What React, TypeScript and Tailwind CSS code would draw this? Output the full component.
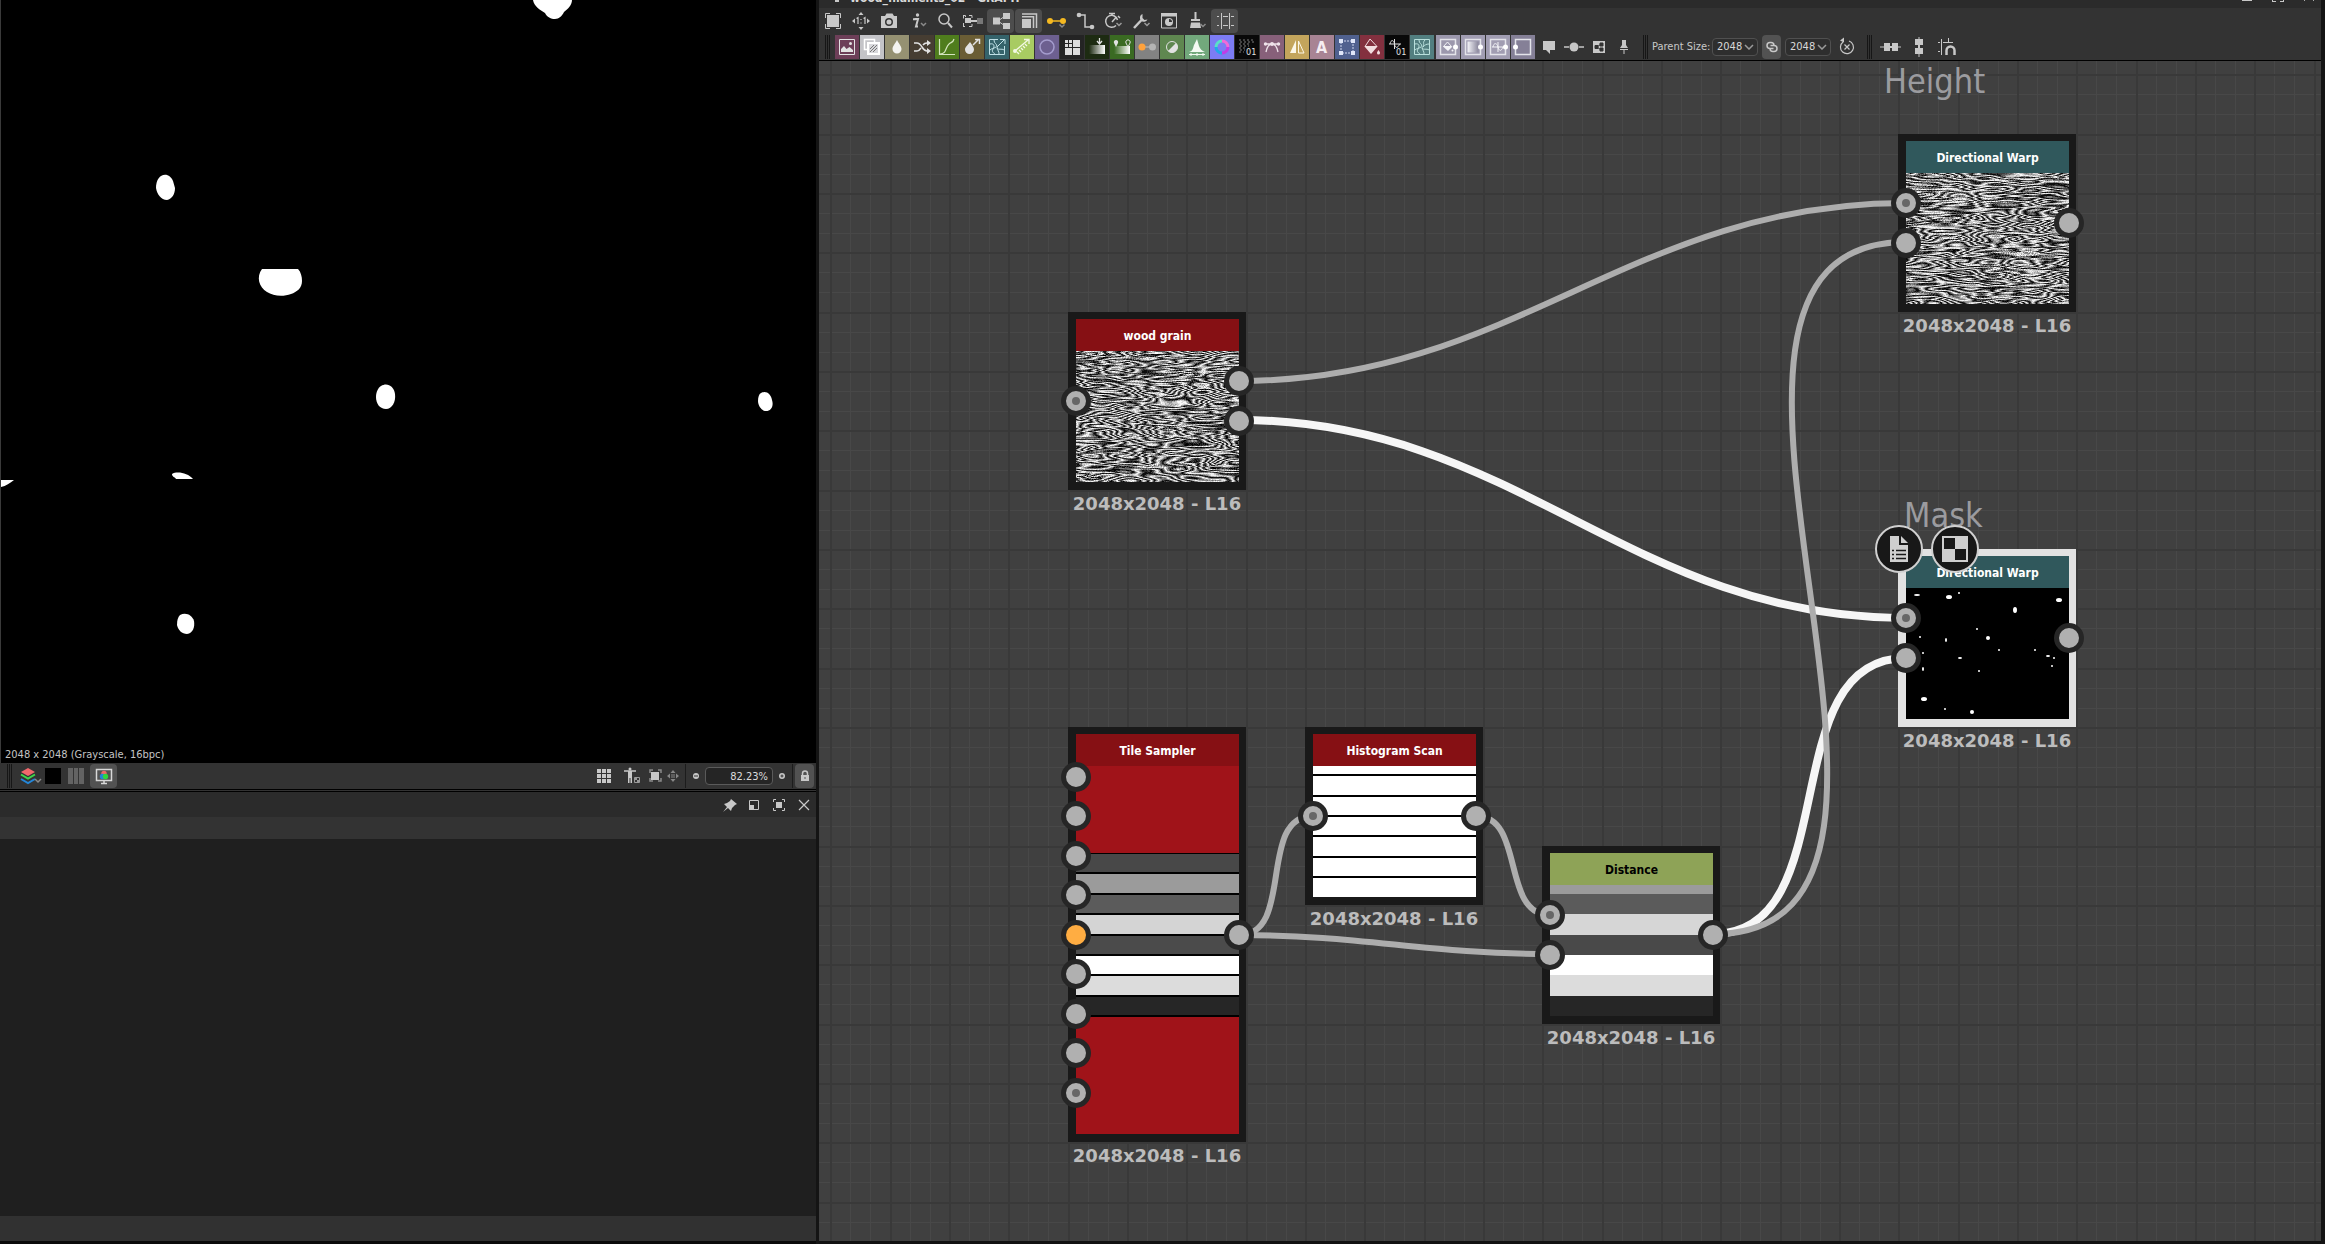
import { ReactNode } from "react";
import clsx from "clsx";

const ui = "font-['DejaVu_Sans_Condensed','Noto_Sans',sans-serif]";

type Tool = { label: string; icon: ReactNode; active?: boolean };
type Atomic = { label: string; bg: string; icon: ReactNode };
type Point = [number, number];
type PinData = { y: number; kind?: "primary" | "warn" };

const Svg = ({ children, w = 24, h = 24 }: { children: ReactNode; w?: number; h?: number }) => (
  <svg width={w} height={h} viewBox={`0 0 ${w} ${h}`} fill="none" stroke="none" className="block shrink-0" aria-hidden="true">
    {children}
  </svg>
);

const light = "#c8c8c8";

const mainTools: Tool[] = [
  {
    label: "Fit view",
    icon: (
      <>
        <path d="M6 6h12v12H6z" fill={light} />
        <path d="M4.500 9V4.500H9M15 4.500h4.500V9M19.500 15v4.500H15M9 19.500H4.500V15" stroke={light} />
      </>
    ),
  },
  {
    label: "Actual size",
    icon: (
      <>
        <path d="M12 3l2.500 3h-5zM12 21l2.500-3h-5zM3 12l3-2.500v5zM21 12l-3-2.500v5z" fill={light} />
        <path d="M7.500 9.500L9 8.500V15M14.500 9.500l1.500-1V15M12 10v1M12 13.500v1" stroke={light} strokeWidth="1.200" />
      </>
    ),
  },
  {
    label: "Screenshot",
    icon: (
      <path fillRule="evenodd" fill={light} d="M4 7h4l1.500-2.500h6L17 7h3v12H4zM12 9a4 4 0 100 8 4 4 0 000-8zm0 1.500a2.500 2.500 0 110 5 2.500 2.500 0 010-5z" />
    ),
  },
  {
    label: "Information",
    icon: (
      <>
        <path d="M9.500 10h3.500l-2 7.500h2M8 10.200h3" stroke={light} strokeWidth="2" />
        <circle cx="12.500" cy="6" r="1.700" fill={light} />
        <path d="M16 14l2.500 2.500L21 14" stroke="#8a8a8a" strokeWidth="1.500" />
      </>
    ),
  },
  {
    label: "Search",
    icon: (
      <>
        <circle cx="11" cy="10" r="5" stroke={light} strokeWidth="1.500" />
        <path d="M15 14l4 4.500" stroke={light} strokeWidth="2" />
      </>
    ),
  },
  {
    label: "Insert between",
    icon: (
      <>
        <path d="M4.500 8V6.500H2M2 17.500h2M2.500 9.500v-3M2.500 14v3.500M8 6.500h3V9M8 17.500h3V15" stroke={light} />
        <path d="M4 9h6v5H4zM10 11h6v2h-6z" fill={light} />
        <path d="M16 9h6v6h-6z" fill="#777" />
      </>
    ),
  },
  {
    label: "Show connections",
    active: true,
    icon: (
      <>
        <path d="M4 8.500h7v7H4zM14 4h7v6h-7zM14 14h7v6h-7z" fill={light} />
        <path d="M9 12l7-5M9 12l7 5" stroke={light} />
      </>
    ),
  },
  {
    label: "Show thumbnails",
    active: true,
    icon: (
      <>
        <path d="M5 10h9v9H5z" fill={light} />
        <path d="M5 7.800h11.500V19M5 5h14.500v14" stroke={light} strokeWidth="1.500" />
      </>
    ),
  },
  {
    label: "Link style",
    icon: (
      <>
        <path d="M5 12h14" stroke="#f5b921" strokeWidth="1.500" />
        <circle cx="5" cy="12" r="3" fill="#f5b921" />
        <circle cx="18" cy="12" r="3" fill="#f5b921" />
        <path d="M14.500 15.500L17 18l2.500-2.500" stroke="#8a8a8a" strokeWidth="1.500" />
      </>
    ),
  },
  {
    label: "Orthogonal links",
    icon: (
      <>
        <path d="M6 6h6v12h7" stroke={light} strokeWidth="1.500" />
        <circle cx="6" cy="6" r="2.300" fill={light} />
        <circle cx="19" cy="18" r="2.300" fill={light} />
      </>
    ),
  },
  {
    label: "Timing",
    icon: (
      <>
        <path d="M15 16.500A6 6 0 1116.500 11" stroke={light} strokeWidth="1.500" />
        <path d="M8 4.500h6M11 5v2M11 13l4-4.500M17 7l2 2" stroke={light} strokeWidth="1.500" />
        <path d="M15.500 14l2.500 2.500L20.500 14" stroke="#9a9a9a" strokeWidth="1.500" />
      </>
    ),
  },
  {
    label: "Tools",
    icon: (
      <>
        <path d="M5 19l8-8.500" stroke={light} strokeWidth="2.500" />
        <path d="M13.500 5a4 4 0 105 5.500l-3 .5-2-2z" fill={light} />
        <path d="M15.500 14l2.500 2.500L20.500 14" stroke="#9a9a9a" strokeWidth="1.500" />
      </>
    ),
  },
  {
    label: "Preview",
    icon: (
      <>
        <path d="M4.500 5h15v14h-15z" stroke={light} />
        <path d="M4 4h16v3.500H4z" fill={light} />
        <circle cx="12" cy="13" r="4" fill={light} />
        <path d="M12 13v-3a3 3 0 013 3z" fill="#333" />
      </>
    ),
  },
  {
    label: "Clean",
    icon: (
      <>
        <path d="M9.500 3h2v7h-2zM6 10h9v2H6zM6 13.500h9L16 19H5z" fill={light} />
        <path d="M15.500 15l2.500 2.500L20.500 15" stroke="#8a8a8a" strokeWidth="1.500" />
      </>
    ),
  },
  {
    label: "Snap to grid",
    active: true,
    icon: <path d="M8.500 4v16M16.500 4v16M4 7.500h2M10 7.500h5M18 7.500h3M4 16.500h2M10 16.500h5M18 16.500h3" stroke={light} />,
  },
];

const frame = <path d="M4.500 4.500h15v15h-15z" stroke="#e4e4ea" strokeWidth="1.500" />;
const pale = "#e2e2e2";

const atomics: Atomic[] = [
  {
    label: "Bitmap",
    bg: "bg-[#6d3f58]",
    icon: (
      <>
        <path d="M4.500 4.500h15v15h-15z" stroke={pale} />
        <path d="M6 17v-3l3-3 2.500 3 3-2 3.500 3v2z" fill={pale} />
        <circle cx="15.500" cy="8.500" r="1.500" fill={pale} />
      </>
    ),
  },
  {
    label: "Blend",
    bg: "bg-[#c4c4c8]",
    icon: (
      <>
        <path d="M4.500 4.500h10v10h-10z" stroke="#fff" strokeWidth="1.500" />
        <path d="M8 8h11v11H8z" stroke="#fff" strokeWidth="2" fill="#d8d8dc" />
        <path d="M10 14l4-4M10 17l7-7M13 17l4-4" stroke="#777" />
      </>
    ),
  },
  { label: "Blur", bg: "bg-[#959172]", icon: <path d="M12 5c2 4 4.500 6 4.500 9a4.500 4.500 0 01-9 0c0-3 2.500-5 4.500-9z" fill="#f4f4f0" /> },
  {
    label: "Channel shuffle",
    bg: "bg-[#463d32]",
    icon: (
      <>
        <path d="M4 8h3c5 0 5 8 10 8h1M4 16h3c2 0 3-1.500 4-3M13 10c1-1.500 2-2 4-2h1" stroke={pale} strokeWidth="1.500" />
        <path d="M17 5l4 3-4 3zM17 13l4 3-4 3z" fill={pale} />
      </>
    ),
  },
  { label: "Curve", bg: "bg-[#4f7d1d]", icon: <path d="M4.500 4v16M4 19.500h16M5 19c7 0 5-7 9-10 2-2 4-1 5-5" stroke="#d5e6c0" strokeWidth="1.200" /> },
  {
    label: "Directional blur",
    bg: "bg-[#6a5d35]",
    icon: (
      <>
        <path d="M10 7c2 3 4 5 4 7.500a4.500 4.500 0 01-9 0C5 12 8 10 10 7z" fill={pale} />
        <path d="M13 10l5-5M15 4.500h4.500V9" stroke={pale} strokeWidth="1.500" />
      </>
    ),
  },
  {
    label: "Directional warp",
    bg: "bg-[#35636b]",
    icon: <path d="M13 4.500H4.500v15h15V11M15 4.500h5V9M19 5l-7 7M5 9c4-1 5 2 3 5s1 4 2 5M9 5c0 4 3 3 3 7s5 1 7 3M5 15c2-2 3-1 6-3M14 19c0-3-1-3-2-6" stroke="#bfe0e6" />,
  },
  {
    label: "Distance",
    bg: "bg-[#a8cb62]",
    icon: (
      <>
        <path d="M5 16L18 5M14 4.500h5V9M9 15l2 2M11 13l2 2M13 11l2 2M15 9l2 2M7 17l2 2" stroke="#f2f8e4" strokeWidth="1.300" />
        <circle cx="5" cy="16" r="2" fill="#f2f8e4" />
      </>
    ),
  },
  { label: "Emboss", bg: "bg-[#6d6090]", icon: <circle cx="12" cy="12" r="7" stroke="#a49ccd" strokeWidth="1.500" /> },
  {
    label: "FX map",
    bg: "bg-[#242424]",
    icon: <path d="M5 5h3v3H5zM9 5h3v3H9zM5 9h3v3H5zM9 9h3v3H9zM13 5h7v7h-7zM5 13h7v7H5zM13 13h7v7h-7z" fill="#dcdcdc" />,
  },
  {
    label: "Gradient dynamic",
    bg: "bg-[#1d2b12]",
    icon: (
      <>
        <path d="M4 10h16v9H4z" fill="url(#fade)" />
        <path d="M14.500 3v5M12 6l2.500 3L17 6" stroke={pale} strokeWidth="1.300" />
      </>
    ),
  },
  {
    label: "Gradient map",
    bg: "bg-[#3a6a22]",
    icon: (
      <>
        <path d="M4 11h16v8H4z" fill="url(#fade)" />
        <path d="M6 12L4 8a2.200 2.200 0 114 0z" fill={pale} />
        <path d="M18 12l-2-4a2.200 2.200 0 114 0z" stroke={pale} />
      </>
    ),
  },
  {
    label: "Grayscale conversion",
    bg: "bg-[#828282]",
    icon: (
      <>
        <path d="M7 12h10" stroke="#c0c0c0" />
        <circle cx="7" cy="12" r="3.500" fill="#ffa23c" />
        <circle cx="17.500" cy="12" r="3.500" fill="#b4b4b4" />
      </>
    ),
  },
  {
    label: "HSL",
    bg: "bg-[#5f8750]",
    icon: (
      <>
        <circle cx="12" cy="12" r="5.500" stroke={pale} />
        <path d="M16 8A5.500 5.500 0 018 16z" fill={pale} />
      </>
    ),
  },
  {
    label: "Levels",
    bg: "bg-[#72a87c]",
    icon: (
      <>
        <path d="M4 17c4-1 4-4 5-7l3-6 2 7c1 3 3 5 6 6z" fill="#f3faf3" />
        <path d="M4 19.500h16M6 18v3M12 18v3M18 18v3" stroke="#f3faf3" />
      </>
    ),
  },
  {
    label: "Normal",
    bg: "bg-[#7c7cf4]",
    icon: (
      <>
        <path d="M12 6a6 6 0 016 6" stroke="#f06ad8" strokeWidth="3" />
        <path d="M18 12a6 6 0 01-6 6" stroke="#c03ce8" strokeWidth="3" />
        <path d="M12 18a6 6 0 01-6-6" stroke="#20a8e8" strokeWidth="3" />
        <path d="M6 12a6 6 0 016-6" stroke="#58e0c8" strokeWidth="3" />
      </>
    ),
  },
  {
    label: "Pixel processor",
    bg: "bg-[#090909]",
    icon: (
      <>
        <path d="M4 5h14M5 7h14M4 9h12M5 11h9M4 13h7M5 15h5M4 17h5" stroke="#555" strokeWidth="1.500" strokeDasharray="2 2" />
        <text x="11" y="20" fontSize="9" fill={pale}>01</text>
      </>
    ),
  },
  {
    label: "SVG",
    bg: "bg-[#87607a]",
    icon: (
      <>
        <path d="M4 9h16M6 17c1-5 3-8 6-8s5 3 6 8" stroke="#efe2ea" strokeWidth="1.300" />
        <circle cx="5.500" cy="9" r="1.700" fill="#efe2ea" />
        <circle cx="12" cy="9" r="2" fill="#efe2ea" />
        <circle cx="18.500" cy="9" r="1.700" fill="#efe2ea" />
      </>
    ),
  },
  {
    label: "Mirror",
    bg: "bg-[#c3a55c]",
    icon: (
      <>
        <path d="M11 5v13H5z" fill="#fbf6e6" />
        <path d="M13.500 6v12H19z" stroke="#fbf6e6" />
      </>
    ),
  },
  {
    label: "Text",
    bg: "bg-[#a88494]",
    icon: <text x="6" y="18" fontSize="16" fontWeight="700" fill="#f6eef2">A</text>,
  },
  {
    label: "Transformation",
    bg: "bg-[#50618f]",
    icon: (
      <>
        <path d="M6 6h12v12H6z" stroke="#cfd8f0" strokeDasharray="2 1" />
        <path d="M4 4h4v4H4zM16 4h4v4h-4zM4 16h4v4H4zM16 16h4v4h-4z" fill="#dfe6f8" />
      </>
    ),
  },
  {
    label: "Uniform color",
    bg: "bg-[#83303f]",
    icon: (
      <>
        <path d="M10 4l7 7.500H5z" stroke="#f2dde0" />
        <path d="M4.500 11.500h13L11 19z" fill="#f2dde0" />
        <path d="M18.500 15c1 1.500 1.500 2 1.500 3a1.500 1.500 0 01-3 0c0-1 .5-1.500 1.500-3z" fill="#f2dde0" />
      </>
    ),
  },
  {
    label: "Value processor",
    bg: "bg-[#090909]",
    icon: (
      <>
        <path d="M4 9h12M9.500 4v10M5 9c1-5 4-4 4.500 0s3 5 5 0" stroke={pale} />
        <text x="11" y="20" fontSize="9" fill={pale}>01</text>
      </>
    ),
  },
  {
    label: "Warp",
    bg: "bg-[#527f80]",
    icon: <path d="M4.500 4.500h15v15h-15zM5 9c4-1 5 2 3 5s1 4 2 5M9 5c0 4 3 3 3 7s5 1 7 3M5 15c2-2 3-1 6-3M14 19c0-3-1-3-2-6M15 5c-3 3 0 4-2 7M19 9c-3 0-4 1-6 3" stroke="#b9e0dc" />,
  },
];

const inputs: Atomic[] = [
  {
    label: "Input color",
    bg: "bg-[#9c98ad]",
    icon: (
      <>
        {frame}
        <path d="M11.500 7l4 4.500h-8z" stroke="#f4f4f8" />
        <path d="M7 11.500h9.500L12 16z" fill="#f4f4f8" />
        <circle cx="16.500" cy="15.500" r="1" fill="#f4f4f8" />
        <circle cx="19.500" cy="12" r="2.500" fill="#fff" />
      </>
    ),
  },
  {
    label: "Input grayscale",
    bg: "bg-[#a19db2]",
    icon: (
      <>
        {frame}
        <path d="M6.500 6.500h11v11h-11z" fill="url(#fade-dark)" />
        <circle cx="19.500" cy="12" r="2.500" fill="#fff" />
      </>
    ),
  },
  {
    label: "Input value",
    bg: "bg-[#a19db2]",
    icon: (
      <>
        {frame}
        <path d="M6 12h12M12 7v10M7 12c1-5 4-4 5 0s3 5 5 0" stroke="#f4f4f8" />
        <circle cx="19.500" cy="12" r="2.500" fill="#fff" />
      </>
    ),
  },
  {
    label: "Output",
    bg: "bg-[#858097]",
    icon: (
      <>
        {frame}
        <circle cx="4.500" cy="12" r="2.500" fill="#fff" />
      </>
    ),
  },
];

const extras: Tool[] = [
  { label: "Comment", icon: <path d="M6 6h12v9h-5v4l-4-4H6z" fill={light} /> },
  {
    label: "Dot",
    icon: (
      <>
        <path d="M2 12h5M17 12h5" stroke={light} strokeWidth="1.500" />
        <circle cx="12" cy="12" r="4.500" fill={light} />
      </>
    ),
  },
  {
    label: "Frame",
    icon: (
      <>
        <path d="M6 6h12v12H6z" fill={light} />
        <path d="M8 10.500h3v3H8zM13 8h3v3h-3zM13 13h3v3h-3zM10 12l4-3M10 12l4 3" fill="#333" stroke="#333" />
      </>
    ),
  },
  {
    label: "Navigation pin",
    icon: (
      <>
        <path d="M12 14v5M8 14.500h8" stroke={light} />
        <path d="M10 5h4v5l2 3H8l2-3z" fill={light} />
      </>
    ),
  },
];

const aligners: Tool[] = [
  { label: "Align horizontally", icon: <path d="M1 11.500h4V8h6v3h2V8h6v3.500h3v1h-3V16h-6v-3h-2v3H5v-3.500H1z" fill={light} /> },
  { label: "Align vertically", icon: <path d="M11.500 2h1v2H16v6h-3v3h3v6h-3.500v3h-1v-3H8v-6h3v-3H8V4h3.500z" fill={light} /> },
  {
    label: "Snap",
    icon: (
      <>
        <path d="M6.500 4v16M13.500 3v4M3 7.500h2M8 7.500h10M3 16.500h2" stroke={light} />
        <path d="M11.500 20v-4.500a4 4 0 018 0V20" stroke={light} strokeWidth="2.500" />
      </>
    ),
  },
];

const Grip = () => (
  <div className="flex h-6 gap-px">
    <i className="w-px bg-[#161616]" />
    <i className="w-px bg-[#161616]" />
    <i className="w-px bg-[#161616]" />
  </div>
);

const ToolButton = ({ label, icon, active }: Tool) => (
  <button
    aria-label={label}
    className={clsx("flex h-6 w-[27px] items-center justify-center rounded-sm", active && "bg-[#4d4d4d]")}
  >
    <Svg>{icon}</Svg>
  </button>
);

const AtomicButton = ({ label, bg, icon }: Atomic) => (
  <button aria-label={label} className={clsx("h-6 w-6", bg)}>
    <Svg>{icon}</Svg>
  </button>
);

const SizeSelect = ({ label, id }: { label: string; id: string }) => (
  <div className="relative">
    <select
      id={id}
      aria-label={label}
      defaultValue="2048"
      className="block h-[18px] w-[46px] appearance-none rounded-sm border border-[#505050] bg-[#2e2e2e] pl-1 text-[11px] leading-4 text-[#d8d8d8]"
    >
      <option>1024</option>
      <option>2048</option>
      <option>4096</option>
    </select>
    <svg width="10" height="6" viewBox="0 0 10 6" className="pointer-events-none absolute top-[6px] right-1">
      <path d="M1 1l4 4 4-4" fill="none" stroke="#9a9a9a" strokeWidth="1.500" />
    </svg>
  </div>
);

// ---------- 2D view ----------

const Viewer = () => (
  <div className="relative min-h-0 flex-1 overflow-hidden border-l border-[#3a3a3a] bg-black">
    <svg width="815" height="763" className="block" fill="#fff">
      <path d="M532 0h39c0 5-4 9-8 12-2 4-5 7-9 7s-8-2-10-6c-5-3-11-7-12-13z" />
      <path d="M160 176c5-3 10 0 12 5l2 7c0 6-3 11-8 12-6 0-10-6-11-12 0-6 2-10 5-12z" />
      <path d="M261 269h36c3 3 4 8 4 12 0 7-5 11-11 13-8 3-18 2-24-2-8-5-11-15-5-23z" />
      <path d="M380 386c6-4 13 0 14 8 1 8-3 15-9 15s-10-5-10-12c0-5 2-9 5-11z" />
      <path d="M760 393c5-3 10 1 11 7 2 6-1 11-6 11-4 0-8-5-8-10 0-4 1-7 3-8z" />
      <path d="M171 474c5-3 16-1 21 5h-17c-1-2-4-2-4-5z" />
      <path d="M0 480h13c-4 3-8 6-13 7z" />
      <path d="M179 615c6-3 12 0 14 6 1 6-1 12-7 13-5 0-9-4-10-9 0-5 1-8 3-10z" />
    </svg>
    <p className="absolute bottom-0 left-1 text-[11px] leading-4 text-[#c4c4c4]">2048 x 2048 (Grayscale, 16bpc)</p>
  </div>
);

const ViewerBar = () => (
  <div className="flex h-[26px] shrink-0 items-center bg-[#333] pr-px pl-[7px]">
    <Grip />
    <button aria-label="Channels" className="ml-2">
      <Svg w={25}>
        <path d="M8 4l7 4-7 4-7-4z" fill="#f2686c" />
        <path d="M1 10.500l7 4 7-4" stroke="#3fd64c" strokeWidth="2" />
        <path d="M1 15l7 4 7-4" stroke="#2486d8" strokeWidth="2" />
        <path d="M15 15l3 3 3-3" stroke="#8a8a8a" strokeWidth="1.500" />
      </Svg>
    </button>
    <button aria-label="Background colour" className="h-4 w-4 bg-black" />
    <button aria-label="Tiling" className="ml-[7px] flex h-4 w-4 gap-px">
      <i className="flex-1 bg-[#636363]" />
      <i className="flex-1 bg-[#636363]" />
      <i className="flex-1 bg-[#636363]" />
    </button>
    <button aria-label="Colour management" className="ml-[6px] flex h-6 w-[27px] items-center justify-center rounded-sm bg-[#525252]">
      <Svg>
        <path d="M4.500 5.500h15v11h-15zM9 19.500h6M12 17v2" stroke="#d8d8d8" strokeWidth="1.500" />
        <circle cx="12" cy="9.500" r="2.700" fill="#f0666a" />
        <circle cx="10.500" cy="12.500" r="2.700" fill="#2486d8" />
        <circle cx="13.500" cy="12.500" r="2.700" fill="#2fd63f" />
      </Svg>
    </button>
    <div className="ml-auto flex items-center">
      <button aria-label="Grid">
        <Svg w={20}>
          <path d="M3 5h4v4H3zM8 5h4v4H8zM13 5h4v4h-4zM3 10h4v4H3zM8 10h4v4H8zM13 10h4v4h-4zM3 15h4v4H3zM8 15h4v4H8zM13 15h4v4h-4z" fill={light} />
        </Svg>
      </button>
      <button aria-label="Physical size" className="ml-2">
        <Svg>
          <path d="M2 7h12M8 8v4" stroke={light} strokeWidth="1.500" />
          <path d="M6 7h4v12H8.500v-5h-1v5H6z" fill={light} />
          <circle cx="8" cy="5" r="1.500" fill={light} />
          <path d="M12.500 13.500h5v5h-5z" stroke="#9a9a9a" />
          <path d="M13 14h2v2h2v2h-2v-2h-2z" fill="#9a9a9a" />
        </Svg>
      </button>
      <button aria-label="Fit">
        <Svg w={18}>
          <path d="M5 8h8v8H5z" fill={light} />
          <path d="M4 9V6h3M12 6h3v3M15 14v3h-3M7 17H4v-3" stroke="#8a8a8a" strokeWidth="1.500" />
        </Svg>
      </button>
      <button aria-label="Actual size">
        <Svg w={18}>
          <path d="M9 6l2.500 3h-5zM9 18l2.500-3h-5zM3 12l3-2.500v5zM15 12l-3-2.500v5z" fill="#888" />
          <path d="M8 10v4M10 10v4" stroke="#888" />
        </Svg>
      </button>
      <i className="mx-[3px] h-6 w-px bg-[#1c1c1c]" />
      <button aria-label="Zoom out">
        <Svg w={16}>
          <circle cx="7" cy="12" r="3" fill={light} />
          <path d="M5 12h4" stroke="#333" />
        </Svg>
      </button>
      <input
        aria-label="Zoom"
        defaultValue="82.23%"
        className="h-[18px] w-[68px] rounded-sm border border-[#5a5a5a] bg-[#252525] px-1 text-right text-[11px] leading-4 text-[#dcdcdc]"
      />
      <button aria-label="Zoom in" className="ml-px">
        <Svg w={16}>
          <circle cx="8" cy="12" r="3" fill={light} />
          <path d="M6.500 12h3M8 10.500v3" stroke="#333" />
        </Svg>
      </button>
      <i className="mx-[2px] h-6 w-px bg-[#1c1c1c]" />
      <button aria-label="Lock" className="mr-px flex h-6 w-[19px] justify-center rounded-sm bg-[#525252]">
        <Svg w={18}>
          <path d="M6.500 11V9.500a2.500 2.500 0 015 0V11" stroke={light} strokeWidth="1.500" />
          <path d="M5 11h8v6H5z" fill={light} />
          <path d="M9 13v2" stroke="#525252" />
        </Svg>
      </button>
    </div>
  </div>
);

const DockPanel = () => (
  <section className="flex h-[452px] shrink-0 flex-col border-b-[3px] border-[#0a0a0a] bg-[#1f1f1f]">
    <header className="flex h-[25px] shrink-0 items-center justify-end bg-[#2b2b2b]">
      <button aria-label="Pin" className="mr-px">
        <Svg>
          <path d="M14 6l6 5-2 1-3 3-1 3-3-3-5 4 4-5-3-3 3-1 3-2z" fill={light} />
        </Svg>
      </button>
      <button aria-label="Detach" className="mr-px">
        <Svg>
          <path d="M7.500 7.500h9v9h-9z" stroke={light} />
          <path d="M7 12h5v5H7z" fill={light} />
        </Svg>
      </button>
      <button aria-label="Maximize" className="mr-px">
        <Svg>
          <path d="M9 9h6v6H9z" fill={light} />
          <path d="M6.500 9V6.500H9M15 6.500h2.500V9M17.500 15v2.500H15M9 17.500H6.500V15" stroke={light} />
        </Svg>
      </button>
      <button aria-label="Close">
        <Svg>
          <path d="M7 7l10 10M17 7L7 17" stroke={light} strokeWidth="1.200" />
        </Svg>
      </button>
    </header>
    <div className="h-[22px] shrink-0 bg-[#333]" />
    <div className="flex-1" />
    <footer className="h-[25px] shrink-0 bg-[#313131]" />
  </section>
);

// ---------- graph ----------

const Pin = ({ kind }: { kind?: PinData["kind"] }) => (
  <span
    className={clsx(
      "flex h-[30px] w-[30px] items-center justify-center rounded-full border-[5px] border-[#262626]",
      kind === "warn" ? "bg-[#ffad42]" : "bg-[#b0b0b0]",
    )}
  >
    {kind === "primary" && <i className="h-2 w-2 rounded-full bg-[#666]" />}
  </span>
);

type NodeProps = {
  title: string;
  at: Point;
  header: string;
  tall?: boolean;
  selected?: boolean;
  ins: PinData[];
  outs: number[];
  children: ReactNode;
};

// positions are measured from the top left corner of the graph canvas
const GraphNode = ({ title, at, header, tall, selected, ins, outs, children }: NodeProps) => (
  <article className="absolute w-[178px]" style={{ left: at[0], top: at[1] }}>
    <div
      className={clsx(
        "flex flex-col pt-[7px] pr-[7px] pb-2 pl-2",
        tall ? "h-[415px]" : "h-[178px]",
        selected ? "bg-[#e2e2e2]" : "bg-[#191919]",
      )}
    >
      <h3
        className={clsx(
          "flex h-8 shrink-0 items-center justify-center pt-[2px] text-[12px] leading-4 font-bold",
          header,
        )}
      >
        {title}
      </h3>
      <div className="min-h-0 flex-1 overflow-hidden">{children}</div>
    </div>
    <p className="mt-[2px] text-center font-['DejaVu_Sans',sans-serif] text-[18px] leading-6 font-bold whitespace-nowrap text-[#bcbcbc]">
      2048x2048 - L16
    </p>
    {ins.map((pin) => (
      <span key={pin.y} className="absolute -left-[7px]" style={{ top: pin.y - 15 }}>
        <Pin kind={pin.kind} />
      </span>
    ))}
    {outs.map((y) => (
      <span key={y} className="absolute -right-2" style={{ top: y - 15 }}>
        <Pin />
      </span>
    ))}
  </article>
);

// repeated black and white steps turn the noise into contour lines
const rings = "0 1 0 1 0 1 0 1 0 1 0 1 0 1 0 1 0 1 0 1 0 1 0 1 0 1 0 1 0";

const Grain = ({ seed }: { seed: number }) => (
  <svg width="163" height="131" className="block">
    <filter id={`grain-${seed}`} x="0" y="0" width="100%" height="100%" colorInterpolationFilters="sRGB">
      <feTurbulence type="fractalNoise" baseFrequency="0.014 0.09" numOctaves="2" seed={seed} />
      <feColorMatrix values="1 0 0 0 0  1 0 0 0 0  1 0 0 0 0  0 0 0 0 1" />
      <feComponentTransfer>
        <feFuncR type="table" tableValues={rings} />
        <feFuncG type="table" tableValues={rings} />
        <feFuncB type="table" tableValues={rings} />
      </feComponentTransfer>
    </filter>
    <rect width="163" height="131" filter={`url(#grain-${seed})`} />
  </svg>
);

const specks = [
  [11, 7, 3, 1], [43, 9, 3, 2], [53, 5, 1, 1], [153, 12, 3, 2], [109, 22, 2, 3], [71, 41, 1, 1], [14, 49, 1, 1],
  [40, 52, 1, 2], [82, 50, 2, 2], [93, 62, 1, 1], [129, 62, 1, 1], [17, 65, 1, 1], [54, 70, 2, 1], [142, 68, 2, 1],
  [148, 70, 1, 1], [146, 78, 1, 1], [17, 81, 1, 2], [73, 83, 1, 1], [18, 111, 3, 2], [39, 121, 1, 1], [66, 124, 2, 2],
];

const Band = ({ color, h, line }: { color: string; h: string; line?: boolean }) => (
  <div className={clsx("w-full", color, h, line && "border-b-2 border-black")} />
);

const wires: { from: Point; to: Point; hot?: boolean }[] = [
  { from: [420, 359], to: [1087, 557], hot: true },
  { from: [894, 873], to: [1087, 597], hot: true },
  { from: [420, 320], to: [1087, 142] },
  { from: [894, 873], to: [1087, 181] },
  { from: [420, 874], to: [494, 755] },
  { from: [420, 874], to: [731, 893] },
  { from: [657, 755], to: [731, 854] },
];

const wirePath = ([x1, y1]: Point, [x2, y2]: Point) => {
  const pull = Math.hypot(x2 - x1, y2 - y1) * 0.4;
  return `M${x1} ${y1}C${x1 + pull} ${y1} ${x2 - pull} ${y2} ${x2} ${y2}`;
};

const Canvas = () => (
  <main className="relative min-h-0 flex-1 overflow-hidden bg-[#404040]">
    <svg className="absolute inset-0 h-full w-full" aria-hidden="true">
      <defs>
        <linearGradient id="fade">
          <stop offset="0" stopColor="#fff" stopOpacity="0" />
          <stop offset="1" stopColor="#fff" />
        </linearGradient>
        <linearGradient id="fade-dark">
          <stop offset="0" stopColor="#f4f4f8" />
          <stop offset="1" stopColor="#8a879c" />
        </linearGradient>
        <pattern id="grid" x="249" y="251" width="178" height="178" patternUnits="userSpaceOnUse">
          <path d="M20.500 0v178M40.500 0v178M79.500 0v178M99.500 0v178M138.500 0v178M158.500 0v178M0 20.500h178M0 40.500h178M0 79.500h178M0 99.500h178M0 138.500h178M0 158.500h178" stroke="#484848" />
          <path d="M1 0v178M60 0v178M119 0v178M0 1h178M0 60h178M0 119h178" stroke="#393939" strokeWidth="2" />
        </pattern>
      </defs>
      <rect width="100%" height="100%" fill="url(#grid)" />
      {wires.map(({ from, to, hot }) => (
        <path
          key={`${from}-${to}`}
          d={wirePath(from, to)}
          fill="none"
          stroke={hot ? "#f6f6f6" : "#adadad"}
          strokeWidth={hot ? 8 : 6}
        />
      ))}
    </svg>

    <h2 className="absolute top-0 left-[1065px] text-[34px] leading-10 text-[#9b9b9f]">Height</h2>
    <h2 className="absolute top-[434px] left-[1085px] text-[34px] leading-10 text-[#9b9b9f]">Mask</h2>

    <GraphNode title="wood grain" at={[249, 251]} header="bg-[#861014] text-white" ins={[{ y: 89, kind: "primary" }]} outs={[69, 109]}>
      <Grain seed={4} />
    </GraphNode>

    <GraphNode title="Directional Warp" at={[1079, 73]} header="bg-[#30585c] text-white" ins={[{ y: 69, kind: "primary" }, { y: 109 }]} outs={[89]}>
      <Grain seed={9} />
    </GraphNode>

    <GraphNode title="Directional Warp" at={[1079, 488]} header="bg-[#30585c] text-white" selected ins={[{ y: 69, kind: "primary" }, { y: 109 }]} outs={[89]}>
      <svg width="163" height="131" className="block bg-black" fill="#fff">
        {specks.map(([x, y, rx, ry]) => (
          <ellipse key={`${x}-${y}`} cx={x} cy={y} rx={rx} ry={ry} />
        ))}
      </svg>
    </GraphNode>

    <GraphNode
      title="Tile Sampler"
      at={[249, 666]}
      header="bg-[#861014] text-white"
      tall
      ins={[
        { y: 50 }, { y: 89 }, { y: 129 }, { y: 168 }, { y: 208, kind: "warn" }, { y: 247 }, { y: 287 }, { y: 326 },
        { y: 366, kind: "primary" },
      ]}
      outs={[208]}
    >
      <Band color="bg-[#a01319]" h="h-[87px]" />
      <Band color="bg-[#484848] border-t" h="h-[21px]" line />
      <Band color="bg-[#9b9b9b]" h="h-[21px]" line />
      <Band color="bg-[#5b5b5b]" h="h-5" line />
      <Band color="bg-[#d4d4d4]" h="h-[21px]" line />
      <Band color="bg-[#4b4b4b]" h="h-5" line />
      <Band color="bg-white" h="h-5" line />
      <Band color="bg-[#dcdcdc]" h="h-[21px]" line />
      <Band color="bg-[#262626]" h="h-5" line />
      <Band color="bg-[#a01319]" h="h-full" />
    </GraphNode>

    <GraphNode title="Histogram Scan" at={[486, 666]} header="bg-[#861014] text-white" ins={[{ y: 89, kind: "primary" }]} outs={[89]}>
      <Band color="bg-white" h="h-[10px]" line />
      <Band color="bg-white" h="h-[21px]" line />
      <Band color="bg-white" h="h-5" line />
      <Band color="bg-white" h="h-5" line />
      <Band color="bg-white" h="h-[21px]" line />
      <Band color="bg-white" h="h-5" line />
      <Band color="bg-white" h="h-full" />
    </GraphNode>

    <GraphNode title="Distance" at={[723, 785]} header="bg-[#8ea357] text-black" ins={[{ y: 69, kind: "primary" }, { y: 109 }]} outs={[89]}>
      <Band color="bg-[#9b9b9b]" h="h-[9px]" />
      <Band color="bg-[#5b5b5b]" h="h-5" />
      <Band color="bg-[#d6d6d6]" h="h-[21px]" />
      <Band color="bg-[#494949]" h="h-5" />
      <Band color="bg-white" h="h-5" />
      <Band color="bg-[#dcdcdc]" h="h-[21px]" />
      <Band color="bg-[#262626]" h="h-full" />
    </GraphNode>

    <div className="absolute top-[464px] left-[1056px] flex gap-2">
      <span className="flex h-12 w-12 items-center justify-center rounded-full border-2 border-[#d0d0d0] bg-[#181818]">
        <Svg w={20} h={26}>
          <path d="M1 0h9v9h9v17H1z" fill="#cfcfcf" />
          <path d="M12 0l7 7h-7z" fill="#cfcfcf" />
          <path d="M3 14.500h2M7 14.500h10M3 18.500h2M7 18.500h10M3 22.500h2M7 22.500h10" stroke="#181818" strokeWidth="1.500" />
        </Svg>
      </span>
      <span className="flex h-12 w-12 items-center justify-center rounded-full border-2 border-[#d0d0d0] bg-[#181818]">
        <Svg w={26} h={26}>
          <path d="M0 0h26v26H0z" fill="#cfcfcf" />
          <path d="M2 2h11v11H2zM13 13h11v11H13z" fill="#181818" />
        </Svg>
      </span>
    </div>
  </main>
);

const GraphPanel = () => (
  <section className="mr-1 ml-[3px] flex min-w-0 flex-1 flex-col border-b-[3px] border-[#111]">
    <header className="flex h-2 shrink-0 items-end overflow-hidden bg-[#2b2b2b]">
      <span className="ml-4 h-[2px] w-1 self-start bg-[#c8c8c8]" />
      <h1 className="ml-[11px] self-start">
        <span className="-mt-2 block text-[12px] leading-3 font-bold text-[#d8d8d8]">wood_filaments_02 - GRAPH</span>
      </h1>
      <div className="mr-[7px] ml-auto flex gap-5 self-start">
        <button aria-label="Minimize" className="h-px w-[10px] bg-[#c8c8c8]" />
        <button aria-label="Maximize" className="flex h-[2px] w-3 justify-between">
          <i className="h-[2px] w-1 border-b border-l border-[#c8c8c8]" />
          <i className="h-[2px] w-1 border-r border-b border-[#c8c8c8]" />
        </button>
        <button aria-label="Close" className="flex h-px w-[10px] justify-between">
          <i className="h-px w-px bg-[#aaa]" />
          <i className="h-px w-px bg-[#aaa]" />
        </button>
      </div>
    </header>
    <nav className="flex h-[27px] shrink-0 items-start gap-px bg-[#333] pt-px">
      {mainTools.map((tool) => (
        <ToolButton key={tool.label} {...tool} />
      ))}
    </nav>
    <nav className="flex h-[26px] shrink-0 items-start border-b border-black bg-[#333] pl-[6px]">
      <Grip />
      <div className="ml-[5px] flex gap-px">
        {atomics.map((item) => (
          <AtomicButton key={item.label} {...item} />
        ))}
      </div>
      <div className="ml-[2px] flex gap-px">
        {inputs.map((item) => (
          <AtomicButton key={item.label} {...item} />
        ))}
      </div>
      <div className="ml-[2px] flex">
        {extras.map(({ label, icon }) => (
          <button key={label} aria-label={label} className="w-[25px]">
            <Svg>{icon}</Svg>
          </button>
        ))}
      </div>
      <div className="ml-[6px] flex">
        <Grip />
      </div>
      <div className="flex h-6 items-center">
        <label htmlFor="parent-width" className="ml-1 w-[60px] text-[11px] leading-4 whitespace-nowrap text-[#c8c8c8]">
          Parent Size:
        </label>
        <SizeSelect id="parent-width" label="Parent width" />
        <button aria-label="Link sizes" className="mx-1 flex h-6 w-[19px] items-center justify-center rounded-sm bg-[#525252]">
          <svg width="14" height="14" viewBox="0 0 14 14" fill="none" stroke={light} strokeWidth="1.500">
            <path d="M8.500 8.500L5 8.500a3 3 0 010-6h1a3 3 0 013 3M5.500 5.500h3.500a3 3 0 010 6H8a3 3 0 01-3-3" />
          </svg>
        </button>
        <SizeSelect id="parent-height" label="Parent height" />
        <button aria-label="Reset size" className="ml-1">
          <Svg>
            <path d="M8 7a6.500 6.500 0 106-1" stroke={light} strokeWidth="1.200" />
            <path d="M5 5.500l4-3v5z" fill={light} />
            <path d="M9.500 9.500l5 5M14.500 9.500l-5 5" stroke={light} strokeWidth="1.200" />
          </Svg>
        </button>
      </div>
      <div className="ml-2 flex">
        <Grip />
      </div>
      <div className="ml-[7px] flex gap-1">
        {aligners.map(({ label, icon }) => (
          <button key={label} aria-label={label}>
            <Svg>{icon}</Svg>
          </button>
        ))}
      </div>
    </nav>
    <Canvas />
  </section>
);

export default function App() {
  return (
    <div className={clsx("flex h-screen overflow-hidden bg-[#141414]", ui)}>
      <div className="flex w-[816px] shrink-0 flex-col">
        <Viewer />
        <ViewerBar />
        <div className="h-[3px] shrink-0 border-y border-black bg-[#333]" />
        <DockPanel />
      </div>
      <GraphPanel />
    </div>
  );
}
